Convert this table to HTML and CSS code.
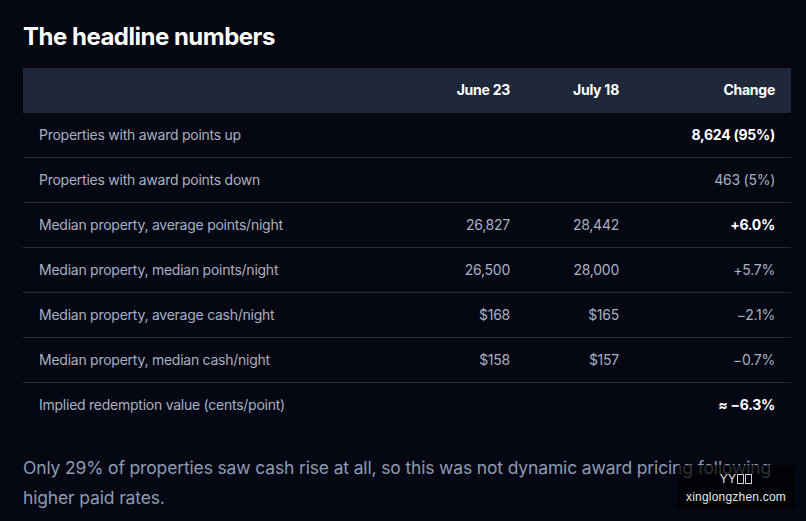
FILE: index.html
```html
<!DOCTYPE html>
<html>
<head>
<meta charset="utf-8">
<link rel="stylesheet" href="styles.css">
</head>
<body>
<main class="page">
  <h2 class="title">The headline numbers</h2>
  <table class="data">
    <colgroup>
      <col class="c-label"><col class="c-num"><col class="c-num"><col class="c-chg">
    </colgroup>
    <thead>
      <tr><th></th><th>June 23</th><th>July 18</th><th>Change</th></tr>
    </thead>
    <tbody>
      <tr><td>Properties with award points up</td><td></td><td></td><td class="strong">8,624 (95%)</td></tr>
      <tr><td>Properties with award points down</td><td></td><td></td><td>463 (5%)</td></tr>
      <tr><td>Median property, average points/night</td><td>26,827</td><td>28,442</td><td class="strong">+6.0%</td></tr>
      <tr><td>Median property, median points/night</td><td>26,500</td><td>28,000</td><td>+5.7%</td></tr>
      <tr><td>Median property, average cash/night</td><td>$168</td><td>$165</td><td>&minus;2.1%</td></tr>
      <tr><td>Median property, median cash/night</td><td>$158</td><td>$157</td><td>&minus;0.7%</td></tr>
      <tr><td>Implied redemption value (cents/point)</td><td></td><td></td><td class="strong">&asymp; &minus;6.3%</td></tr>
    </tbody>
  </table>
  <p class="note">Only 29% of properties saw cash rise at all, so this was not dynamic award pricing following higher paid rates.</p>
</main>
<div class="watermark">
  <div>YY<span class="tofu"></span><span class="tofu"></span></div>
  <div>xinglongzhen.com</div>
</div>
</body>
</html>
```
FILE: styles.css
```css
html, body {
  margin: 0;
  padding: 0;
  background: #050713;
}
body {
  font-family: Inter, "Noto Sans", sans-serif;
  color: #a7b1c2;
  width: 806px;
  height: 521px;
  overflow: hidden;
  position: relative;
}
.page {
  padding: 22px 15px 0 23px;
}
.title {
  margin: 0 0 17px 0;
  font-size: 24px;
  line-height: 29px;
  font-weight: 700;
  color: #ffffff;
  letter-spacing: -0.5px;
}
.data {
  width: 768px;
  border-collapse: collapse;
  table-layout: fixed;
  font-size: 14px;
  letter-spacing: -0.25px;
}
.c-label { width: 394px; }
.c-num { width: 109px; }
.c-chg { width: 156px; }
.data thead tr {
  background: #1e2838;
}
.data th {
  height: 43px;
  padding: 0 16px 2px 16px;
  text-align: right;
  color: #ffffff;
  font-weight: 700;
  font-size: 14px;
}
.data td {
  height: 42px;
  padding: 0 16px 2px 16px;
  text-align: right;
  color: #a7b1c2;
  border-bottom: 1px solid #252d3c;
}
.data td:first-child {
  text-align: left;
}
.data tbody tr:last-child td {
  border-bottom: none;
}
.data td.strong {
  color: #ffffff;
  font-weight: 700;
}
.note {
  margin: 26px 0 0 0;
  font-size: 17.5px;
  line-height: 30px;
  color: #8e9bb2;
  letter-spacing: -0.15px;
}
.watermark {
  position: absolute;
  left: 677px;
  top: 465px;
  width: 118px;
  height: 43px;
  background: rgba(0, 0, 0, 0.7);
  color: #e6e6e6;
  font-family: "Liberation Sans", sans-serif;
  font-size: 12px;
  line-height: 18px;
  text-align: center;
  padding-top: 5px;
  box-sizing: border-box;
  letter-spacing: 0.2px;
}
.tofu {
  display: inline-block;
  width: 5px;
  height: 8px;
  border: 1px solid #cfcfcf;
  margin-left: 1px;
  vertical-align: -1px;
}
```
